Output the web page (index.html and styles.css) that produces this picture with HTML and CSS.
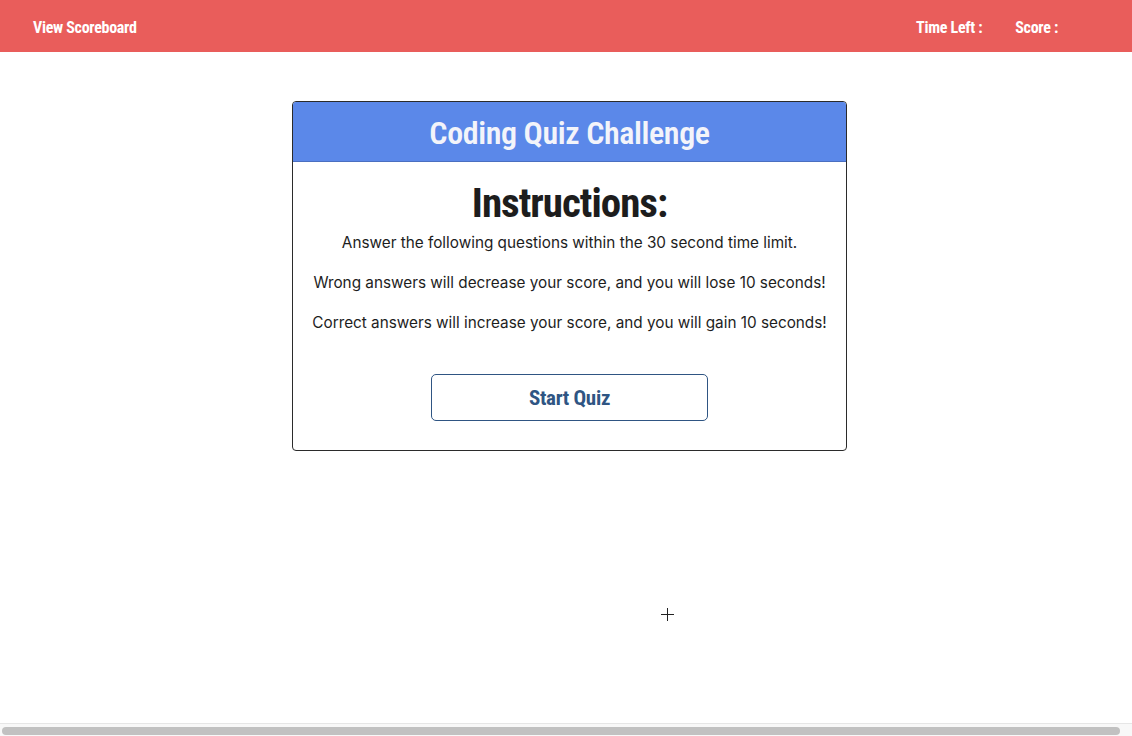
FILE: index.html
```html
<!DOCTYPE html>
<html>
<head>
<meta charset="utf-8">
<title>Coding Quiz Challenge</title>
<link rel="stylesheet" href="styles.css">
</head>
<body>
<header class="topbar">
  <a class="scoreboard-link" href="#">View Scoreboard</a>
  <div class="stats">
    <span class="stat">Time Left :</span>
    <span class="stat">Score :</span>
  </div>
</header>
<main class="main">
  <section class="card">
    <div class="card-header">
      <h1 class="card-title">Coding Quiz Challenge</h1>
    </div>
    <div class="card-body">
      <h2 class="instructions-title">Instructions:</h2>
      <p class="instruction">Answer the following questions within the 30 second time limit.</p>
      <p class="instruction">Wrong answers will decrease your score, and you will lose 10 seconds!</p>
      <p class="instruction">Correct answers will increase your score, and you will gain 10 seconds!</p>
      <button class="start-btn" type="button">Start Quiz</button>
    </div>
  </section>
</main>
<div class="cursor"></div>
<div class="hscroll"><div class="hscroll-thumb"></div></div>
</body>
</html>
```
FILE: styles.css
```css
html, body {
  margin: 0;
  padding: 0;
  background: #ffffff;
}
body {
  font-family: Inter, "Liberation Sans", sans-serif;
  color: #1d1d1d;
  height: 736px;
  overflow: hidden;
}
.topbar {
  height: 52px;
  background: #e95d5b;
  display: flex;
  align-items: center;
  justify-content: space-between;
  padding: 0 74px 0 33px;
  font-family: "Roboto Condensed", "Liberation Sans", sans-serif;
  font-weight: 700;
  font-size: 16px;
  letter-spacing: -0.3px;
}
.scoreboard-link {
  color: #ffffff;
  text-decoration: none;
  margin-top: 3px;
}
.stats {
  display: flex;
  gap: 33px;
  margin-top: 3px;
}
.stat {
  color: #ffffff;
}
.main {
  padding: 49px 0 0 7px;
  display: flex;
  justify-content: center;
}
.card {
  width: 553px;
  border: 1px solid #2b2b2b;
  border-radius: 4px;
  overflow: hidden;
}
.card-header {
  background: #5b88e9;
  height: 59px;
  border-bottom: 1px solid #4a6fc0;
  display: flex;
  align-items: center;
  justify-content: center;
}
.card-title {
  margin: 0;
  color: #f3f4fa;
  font-family: "Roboto Condensed", "Liberation Sans", sans-serif;
  font-weight: 600;
  font-size: 32px;
  letter-spacing: -0.4px;
  line-height: 1;
  padding-top: 2px;
}
.card-body {
  display: flex;
  flex-direction: column;
  align-items: center;
  padding: 17px 0 29px;
}
.instructions-title {
  margin: 0 0 6px;
  font-family: "Roboto Condensed", "Liberation Sans", sans-serif;
  font-weight: 700;
  font-size: 41px;
  letter-spacing: -1px;
  line-height: 48px;
  color: #1d1d1d;
}
.instruction {
  margin: 0 0 20px;
  font-size: 15.3px;
  line-height: 20px;
  color: #1d1d1d;
}
.instruction:last-of-type {
  margin-bottom: 41px;
}
.start-btn {
  width: 277px;
  height: 47px;
  background: #ffffff;
  border: 1px solid #2f5583;
  border-radius: 5px;
  color: #2f5583;
  font-family: "Roboto Condensed", "Liberation Sans", sans-serif;
  font-weight: 700;
  font-size: 21px;
  letter-spacing: -0.3px;
  cursor: pointer;
}
.cursor {
  position: absolute;
  left: 661px;
  top: 608px;
  width: 13px;
  height: 13px;
  background:
    linear-gradient(#222, #222) center / 13px 1px no-repeat,
    linear-gradient(#222, #222) center / 1px 13px no-repeat;
}
.hscroll {
  position: fixed;
  left: 0;
  right: 0;
  bottom: 0;
  height: 12px;
  background: #f8f8f8;
  border-top: 1px solid #e6e6e6;
}
.hscroll-thumb {
  position: absolute;
  left: 2px;
  right: 12px;
  top: 3px;
  height: 8px;
  background: #c1c1c1;
  border-radius: 4px;
}
```
